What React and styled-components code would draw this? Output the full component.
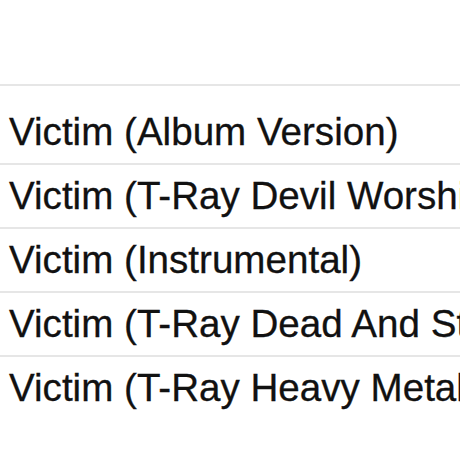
import React from "react";
import styled, { createGlobalStyle } from "styled-components";

const GlobalStyle = createGlobalStyle`
  html, body {
    margin: 0;
    padding: 0;
    background: #ffffff;
  }
  body {
    font-family: "Liberation Sans", Arial, Helvetica, sans-serif;
  }
`;

const Page = styled.div`
  width: 460px;
  height: 460px;
  overflow: hidden;
  display: flex;
  flex-direction: column;
  background: #fff;
`;

const TopSpace = styled.div`
  height: 84px;
  flex-shrink: 0;
`;

const TrackList = styled.div`
  display: flex;
  flex-direction: column;
  border-top: 2px solid #e6e6e6;
  padding-top: 15px;
`;

const TrackRow = styled.div`
  height: 62px;
  display: flex;
  align-items: center;
  padding-left: 9px;
  border-bottom: 2px solid ${(p) => (p.$last ? "transparent" : "#e6e6e6")};
  white-space: nowrap;
  overflow: hidden;
`;

const TrackTitle = styled.span`
  font-size: 38.6px;
  color: #111111;
  -webkit-text-stroke: 0.3px #111111;
`;

const tracks = [
  "Victim (Album Version)",
  "Victim (T-Ray Devil Worship Remix)",
  "Victim (Instrumental)",
  "Victim (T-Ray Dead And Stinky Remix)",
  "Victim (T-Ray Heavy Metal Remix)",
];

function App() {
  return (
    <Page>
      <GlobalStyle />
      <TopSpace />
      <TrackList>
        {tracks.map((t, i) => (
          <TrackRow key={t} $last={i === tracks.length - 1}>
            <TrackTitle>{t}</TrackTitle>
          </TrackRow>
        ))}
      </TrackList>
    </Page>
  );
}

export default App;
